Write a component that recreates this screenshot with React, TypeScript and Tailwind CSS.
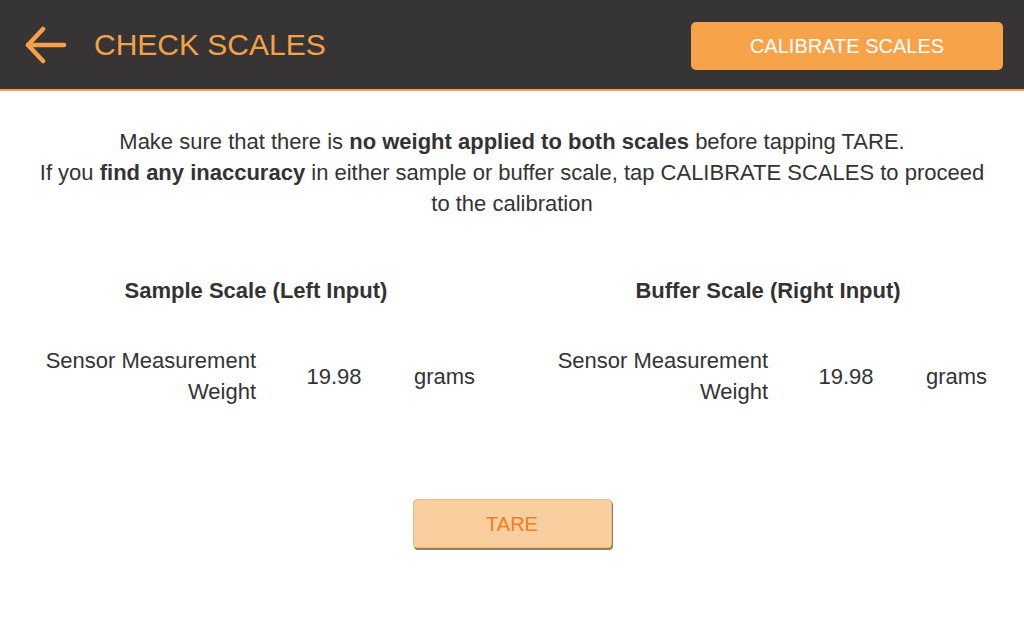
export default function App() {
  return (
    <div className="w-[1024px] h-[620px] bg-white text-[#333333]" style={{ fontFamily: '"Liberation Sans", Arial, sans-serif' }}>
      <header className="h-[91px] bg-[#363435] border-b-2 border-[#f7a145] flex items-center justify-between pl-[25px] pr-[21px]">
        <div className="flex items-center">
          <svg width="42" height="38" viewBox="0 0 42 38" fill="none" stroke="#f7a145" strokeWidth="4.5" strokeLinecap="round" strokeLinejoin="round">
            <path d="M3 19 H39" />
            <path d="M18 3 L3 19 L18 35" />
          </svg>
          <h1 className="ml-[27px] text-[30px] text-[#f7a145] leading-none">CHECK SCALES</h1>
        </div>
        <button className="w-[312px] h-[48px] rounded-[5px] bg-[#f7a34a] text-white text-[20px] mt-[3px]">CALIBRATE SCALES</button>
      </header>
      <main className="flex flex-col items-center">
        <div className="mt-[35px] text-[22px] leading-[31px] text-center px-[36px]">
          <p>Make sure that there is <b>no weight applied to both scales</b> before tapping TARE.</p>
          <p>If you <b>find any inaccuracy</b> in either sample or buffer scale, tap CALIBRATE SCALES to proceed to the calibration</p>
        </div>
        <div className="mt-[56px] w-full grid grid-cols-2">
          {["Sample Scale (Left Input)", "Buffer Scale (Right Input)"].map((t) => (
            <div key={t} className="flex flex-col">
              <h2 className="text-[22px] font-bold text-center leading-[31px]">{t}</h2>
              <div className="mt-[39px] flex items-center text-[22px] leading-[31px]">
                <div className="w-[256px] pl-[36px] text-right">Sensor Measurement Weight</div>
                <div className="w-[156px] text-center">19.98</div>
                <div className="pl-[2px]">grams</div>
              </div>
            </div>
          ))}
        </div>
        <button className="mt-[92px] w-[199px] h-[49px] rounded-[4px] bg-[#f9cf9f] border border-[#e8bb88] shadow-[1px_2px_0_#9e7b5a] text-[#f77b1f] text-[20px]">TARE</button>
      </main>
    </div>
  );
}
